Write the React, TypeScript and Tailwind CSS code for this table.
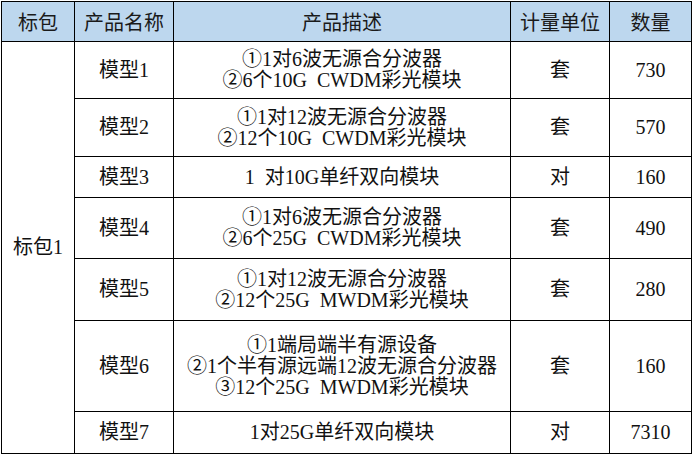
const rows = [
  { name: "模型1", desc: ["①1对6波无源合分波器", "②6个10G  CWDM彩光模块"], unit: "套", qty: "730", h: "h-[57px]" },
  { name: "模型2", desc: ["①1对12波无源合分波器", "②12个10G  CWDM彩光模块"], unit: "套", qty: "570", h: "h-[58px]" },
  { name: "模型3", desc: ["1  对10G单纤双向模块"], unit: "对", qty: "160", h: "h-[41px]" },
  { name: "模型4", desc: ["①1对6波无源合分波器", "②6个25G  CWDM彩光模块"], unit: "套", qty: "490", h: "h-[61px]" },
  { name: "模型5", desc: ["①1对12波无源合分波器", "②12个25G  MWDM彩光模块"], unit: "套", qty: "280", h: "h-[62px]" },
  {
    name: "模型6",
    desc: ["①1端局端半有源设备", "②1个半有源远端12波无源合分波器", "③12个25G  MWDM彩光模块"],
    unit: "套",
    qty: "160",
    h: "h-[91px]",
  },
  { name: "模型7", desc: ["1对25G单纤双向模块"], unit: "对", qty: "7310", h: "h-[42px]" },
];

const cell = "border border-black text-center align-middle p-0";

export default function App() {
  return (
    <div className="w-[692px] h-[456px] bg-white pl-px pt-px font-['Liberation_Serif','Noto_Sans_CJK_SC',serif] text-[20px] leading-[21px] text-[#111]">
      <table className="table-fixed border-collapse w-[690px]">
        <colgroup>
          <col className="w-[73px]" />
          <col className="w-[99px]" />
          <col className="w-[337px]" />
          <col className="w-[99px]" />
          <col className="w-[82px]" />
        </colgroup>
        <thead>
          <tr className="h-[40px] bg-[#bdd7ee] font-['Noto_Sans_CJK_SC',sans-serif] text-[#1a1a1a]">
            <th className={`${cell} font-normal`}>标包</th>
            <th className={`${cell} font-normal`}>产品名称</th>
            <th className={`${cell} font-normal`}>产品描述</th>
            <th className={`${cell} font-normal`}>计量单位</th>
            <th className={`${cell} font-normal`}>数量</th>
          </tr>
        </thead>
        <tbody>
          {rows.map((r, i) => (
            <tr key={r.name} className={r.h}>
              {i === 0 && (
                <td rowSpan={rows.length} className={cell}>
                  标包1
                </td>
              )}
              <td className={cell}>{r.name}</td>
              <td className={cell}>
                {r.desc.map((line) => (
                  <div key={line} className="whitespace-pre">
                    {line}
                  </div>
                ))}
              </td>
              <td className={cell}>{r.unit}</td>
              <td className={cell}>{r.qty}</td>
            </tr>
          ))}
        </tbody>
      </table>
    </div>
  );
}
